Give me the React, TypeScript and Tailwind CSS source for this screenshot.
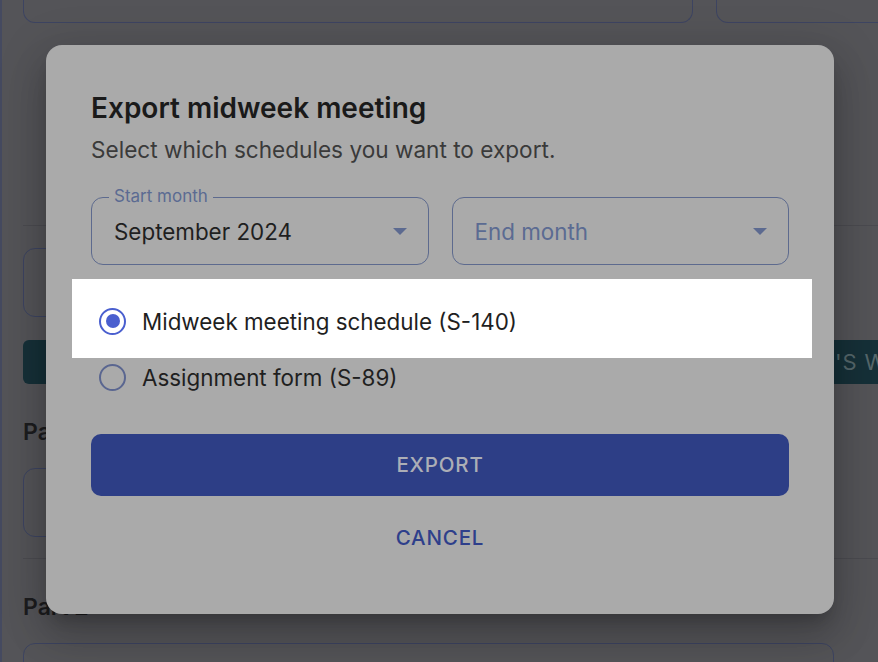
import React from "react";

function Radio({ checked }: { checked: boolean }) {
  return (
    <div
      className={
        checked
          ? "w-[27px] h-[27px] rounded-full border-[2.6px] border-[#4a5fcf] flex items-center justify-center shrink-0"
          : "w-[27px] h-[27px] rounded-full border-[2.6px] border-[#5a6690] flex items-center justify-center shrink-0"
      }
    >
      {checked && <div className="w-[14px] h-[14px] rounded-full bg-[#4a5fcf]" />}
    </div>
  );
}

function Arrow() {
  return (
    <svg width="14" height="7" viewBox="0 0 14 7" className="shrink-0">
      <polygon points="0,0 14,0 7,7" fill="#5c6a90" />
    </svg>
  );
}

export default function App() {
  return (
    <div
      className="relative w-[878px] h-[662px] overflow-hidden bg-[#545458]"
      style={{ fontFamily: "Inter, 'Noto Sans', sans-serif" }}
    >
      {/* dimmed page behind */}
      <div className="h-full border-l-2 border-[#454a60] pl-[21px] flex flex-col overflow-hidden">
        <div className="flex gap-[23px] h-[23px] shrink-0">
          <div className="w-[670px] shrink-0 h-full border border-t-0 border-[#3d4461] rounded-b-[12px]" />
          <div className="w-[300px] shrink-0 h-full border border-t-0 border-[#3d4461] rounded-b-[12px]" />
        </div>
        <div className="mt-[202px] h-px bg-[#4b4b50] w-[900px] shrink-0" />
        <div className="mt-[22px] h-[69px] w-[811px] shrink-0 border border-[#3d4461] rounded-[12px]" />
        <div className="mt-[23px] h-[44px] w-[1000px] shrink-0 bg-[#163038] rounded-[6px] flex items-center text-[22px] tracking-[0.04em] text-[#55676b] overflow-hidden">
          <span className="w-[812px] text-right shrink-0">IMPORT THIS WEEK</span>
          <span className="shrink-0">'S WORKBOOK</span>
        </div>
        <div className="mt-[32px] shrink-0 text-[23px] leading-[32px] font-semibold text-[#1c1c1e]">Part 1</div>
        <div className="mt-[20px] h-[69px] w-[811px] shrink-0 border border-[#3d4461] rounded-[12px]" />
        <div className="mt-[21px] h-px bg-[#4b4b50] w-[900px] shrink-0" />
        <div className="mt-[32px] shrink-0 text-[23px] leading-[32px] font-semibold text-[#1c1c1e]">Part 2</div>
        <div className="mt-[20px] h-[69px] w-[811px] shrink-0 border border-[#3d4461] rounded-[12px]" />
      </div>

      {/* dialog */}
      <div className="absolute left-[46px] top-[45px] w-[788px] bg-[#aaaaaa] rounded-[16px] px-[45px] pt-[46px] pb-[45px] shadow-[0_11px_15px_-7px_rgba(0,0,0,0.2),0_24px_38px_3px_rgba(0,0,0,0.14),0_9px_46px_8px_rgba(0,0,0,0.12)]">
        <div className="text-[28px] leading-[34px] font-semibold text-[#1a1a1a]">Export midweek meeting</div>
        <div className="mt-[8px] text-[22.6px] leading-[33px] text-[#3a3a3a]">Select which schedules you want to export.</div>

        <div className="mt-[31px] flex gap-[23px]">
          <div className="relative flex-1 h-[68px] border border-[#5d6a8e] rounded-[12px] flex items-center pl-[22px] pr-[21px]">
            <span className="absolute left-[17px] top-[-12px] px-[5px] bg-[#aaaaaa] text-[17px] leading-[20px] text-[#5b6b92]">Start month</span>
            <span className="flex-1 text-[22.4px] leading-[33px] text-[#1f1f1f]">September 2024</span>
            <Arrow />
          </div>
          <div className="relative flex-1 h-[68px] border border-[#5d6a8e] rounded-[12px] flex items-center pl-[22px] pr-[21px]">
            <span className="flex-1 text-[22.4px] leading-[33px] text-[#5b6b92]">End month</span>
            <Arrow />
          </div>
        </div>

        <div className="mt-[28px] flex flex-col">
          <div className="relative h-[56px] flex items-center">
            <div className="absolute left-[-19px] right-[-23px] top-[-14px] bottom-[-9px] bg-white" />
            <div className="relative flex items-center pl-[8px] gap-[16px]">
              <Radio checked />
              <span className="text-[22.4px] leading-[33px] text-[#1f1f1f]">Midweek meeting schedule (S-140)</span>
            </div>
          </div>
          <div className="h-[56px] flex items-center pl-[8px] gap-[16px]">
            <Radio checked={false} />
            <span className="text-[22.4px] leading-[33px] text-[#1f1f1f]">Assignment form (S-89)</span>
          </div>
        </div>

        <div className="mt-[29px] h-[62px] rounded-[10px] bg-[#2d3e86] flex items-center justify-center text-[20.5px] font-medium tracking-[0.04em] text-[#acaeb6]">
          EXPORT
        </div>
        <div className="mt-[11px] h-[62px] flex items-center justify-center text-[20.5px] font-medium tracking-[0.04em] text-[#2e3f8b]">
          CANCEL
        </div>
      </div>
    </div>
  );
}
